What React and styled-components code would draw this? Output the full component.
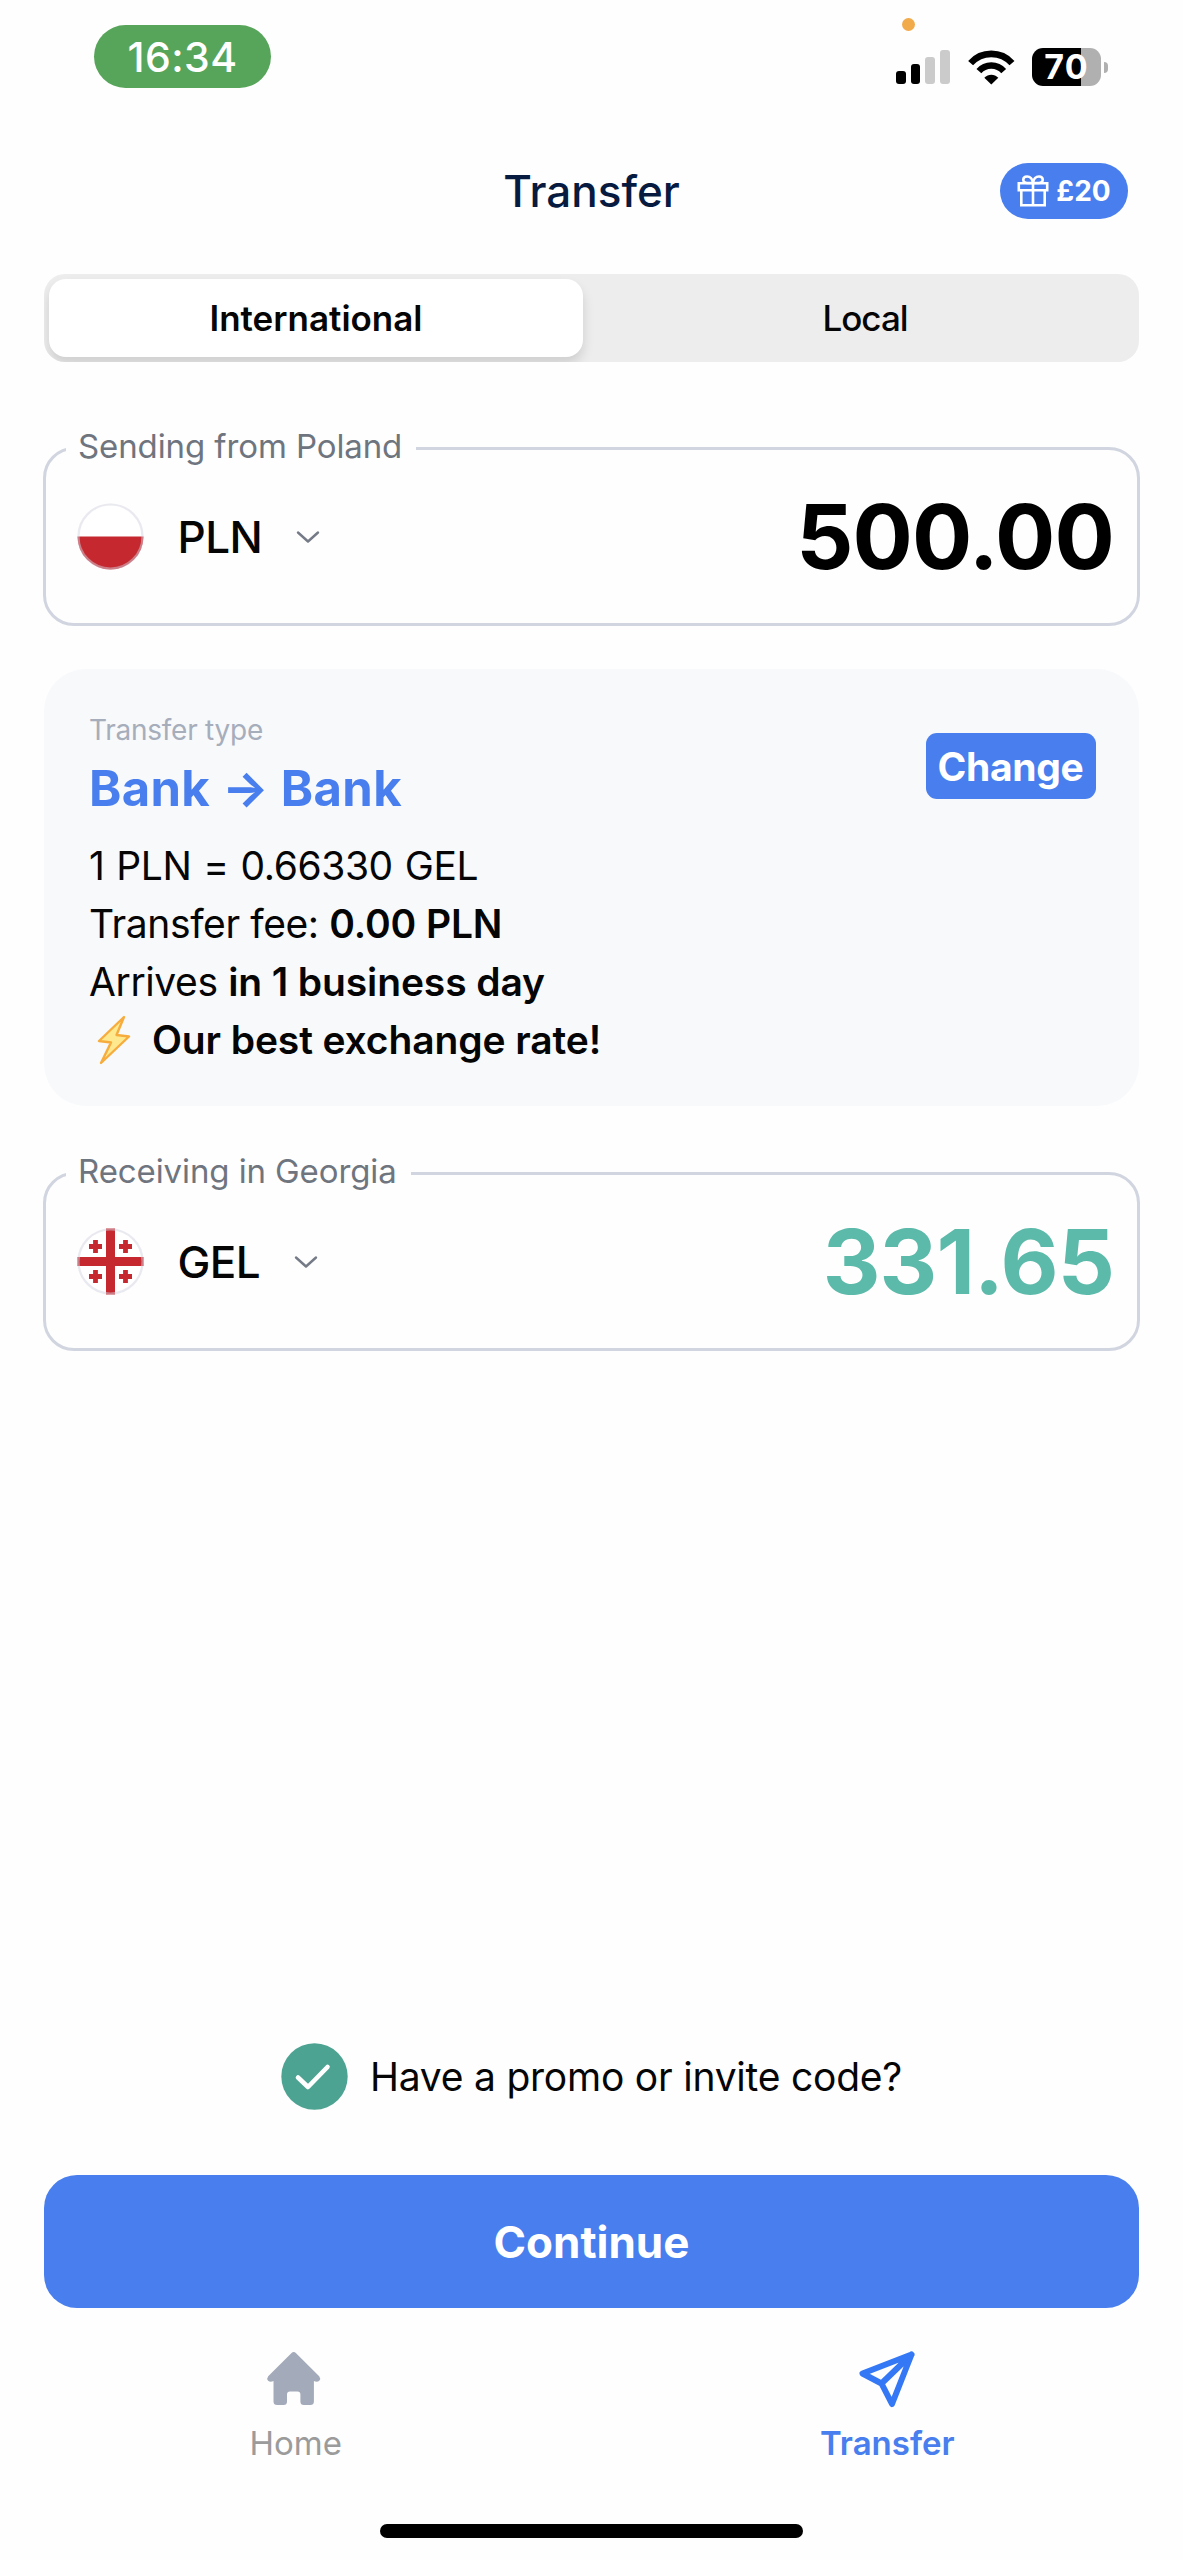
import React from "react";
import styled, { createGlobalStyle } from "styled-components";

const GlobalStyle = createGlobalStyle`
  * {
    box-sizing: border-box;
  }

  body {
    margin: 0;
    background: #fefefe;
    font-family: Inter, sans-serif;
    color: #050505;
  }

  button {
    border: none;
    padding: 0;
    font-family: inherit;
    cursor: pointer;
  }

  svg {
    display: block;
    flex-shrink: 0;
  }
`;

const Screen = styled.div`
  display: flex;
  flex-direction: column;
  width: 1183px;
  height: 2560px;
  background: #fefefe;
  white-space: nowrap;
`;

const StatusBar = styled.div`
  position: relative;
  display: flex;
  justify-content: space-between;
  align-items: flex-start;
  height: 120px;
  padding: 25px 75px 0 94px;
`;

const TimePill = styled.div`
  width: 177px;
  height: 63px;
  border-radius: 32px;
  background: #57a55a;
  color: white;
  font-size: 41px;
  font-weight: 500;
  line-height: 64px;
  text-align: center;
  letter-spacing: 0.4px;
`;

const MicDot = styled.span`
  position: absolute;
  top: 18px;
  left: 902px;
  width: 13px;
  height: 13px;
  border-radius: 50%;
  background: #f1ab4b;
`;

const StatusIcons = styled.div`
  display: flex;
  align-items: center;
  height: 38px;
  margin-top: 23px;
`;

const Signal = styled.div`
  display: flex;
  align-items: flex-end;
  gap: 5px;
  height: 34px;
  margin-right: 17px;
`;

const SignalBar = styled.span`
  width: 9.8px;
  height: ${(props) => props.$height}px;
  border-radius: 3px;
  background: ${(props) => (props.$on ? "#000" : "#cbcbcb")};
`;

const Battery = styled.div`
  width: 69px;
  height: 38px;
  margin: 0 3px 0 17px;
  border-radius: 11px;
  background: linear-gradient(to right, #000 49px, #b0b0b0 49px);
  color: white;
  font-size: 34px;
  font-weight: 700;
  line-height: 38px;
  text-align: center;
  letter-spacing: 1.2px;
`;

const BatteryNub = styled.span`
  width: 4px;
  height: 11px;
  border-radius: 0 5px 5px 0;
  background: #b0b0b0;
`;

const Header = styled.header`
  display: grid;
  grid-template-columns: 1fr auto 1fr;
  align-items: center;
  height: 142px;
  padding: 0 55px;

  h1 {
    grid-column: 2;
    margin: 0;
    font-size: 44px;
    font-weight: 500;
    line-height: 54px;
    color: #071a3f;
  }
`;

const GiftPill = styled.button`
  display: flex;
  align-items: center;
  justify-content: center;
  justify-self: end;
  gap: 7px;
  width: 128px;
  height: 56px;
  border-radius: 28px;
  background: #487eed;
  color: white;
  font-size: 28px;
  font-weight: 700;
`;

const Main = styled.main`
  display: flex;
  flex: 1;
  flex-direction: column;
  padding: 12px 43px 0;
`;

const Segmented = styled.div`
  display: grid;
  grid-template-columns: 534px 1fr;
  column-gap: 8px;
  height: 88px;
  margin: 0 1px;
  padding: 5px 0 5px 5px;
  border-radius: 21px;
  background: #ededed;
  overflow: hidden;
`;

const Segment = styled.button`
  border-radius: 17px;
  background: ${(props) => (props.$active ? "#fff" : "transparent")};
  box-shadow: ${(props) =>
    props.$active ? "0 7px 12px rgba(0, 0, 0, 0.13)" : "none"};
  color: #050505;
  font-size: 35px;
  font-weight: ${(props) => (props.$active ? 600 : 500)};
  letter-spacing: ${(props) => (props.$active ? 0 : -1)}px;
`;

const CurrencyField = styled.fieldset`
  height: 198px;
  min-width: 0;
  margin: ${(props) => props.$top}px 0 0;
  padding: 0 23px 0 20px;
  border: 3px solid #d1d5e0;
  border-radius: 31px;

  legend {
    height: 40px;
    padding: 0 14px 4px 12px;
    font-size: 33px;
    line-height: 36px;
    letter-spacing: -0.1px;
    color: #6f757f;
  }
`;

const FieldRow = styled.div`
  display: flex;
  align-items: center;
  height: 137px;
  padding-left: 11px;
`;

const Currency = styled.span`
  margin: 0 34px 0 33.5px;
  font-size: 44px;
  font-weight: 500;
  letter-spacing: -0.6px;
`;

const Amount = styled.span`
  margin-left: auto;
  font-size: 89.5px;
  font-weight: 700;
  letter-spacing: -0.9px;
  color: ${(props) => props.$color};
`;

const TypeCard = styled.section`
  display: flex;
  justify-content: space-between;
  align-items: flex-start;
  height: 437px;
  margin: 43px 1px 0;
  padding: 42px 43.5px 0 45px;
  border-radius: 42px;
  background: #f8f9fb;
`;

const TypeLabel = styled.div`
  font-size: 28px;
  line-height: 38px;
  letter-spacing: -0.25px;
  color: #a6adbb;
`;

const TypeName = styled.div`
  margin-bottom: 7px;
  font-size: 49px;
  font-weight: 700;
  line-height: 80px;
  letter-spacing: 0.3px;
  color: #487eed;
`;

const RateLine = styled.div`
  display: flex;
  align-items: center;
  height: 58px;
  font-size: 39px;
  letter-spacing: -0.4px;
  word-spacing: ${(props) => props.$wordSpacing || 0}px;
  white-space: pre;

  svg {
    margin-right: 16px;
  }

  b {
    font-weight: 600;
    letter-spacing: -0.12px;
  }
`;

const ChangeButton = styled.button`
  width: 170px;
  height: 66px;
  margin-top: 22px;
  border-radius: 11px;
  background: #487eed;
  color: white;
  font-size: 39px;
  font-weight: 700;
  letter-spacing: -0.3px;
`;

const Promo = styled.div`
  display: flex;
  align-items: center;
  justify-content: center;
  gap: 22px;
  height: 66px;
  margin-top: auto;
  font-size: 39px;
  letter-spacing: -0.23px;
`;

const ContinueButton = styled.button`
  height: 133px;
  margin: 66px 1px 0;
  border-radius: 33px;
  background: #487eed;
  color: white;
  font-size: 44px;
  font-weight: 700;
`;

const TabBar = styled.nav`
  display: grid;
  grid-template-columns: 1fr 1fr;
  height: 216px;
`;

const Tab = styled.a`
  display: flex;
  flex-direction: column;
  align-items: center;
  padding-top: 40px;
  font-size: 33px;
  font-weight: ${(props) => (props.$active ? 600 : 400)};
  color: ${(props) => (props.$active ? "#487eed" : "#9b9b9b")};

  span {
    margin-top: 13px;
    line-height: 40px;
  }
`;

const HomeIndicator = styled.div`
  width: 423px;
  height: 14px;
  margin: 0 auto 22px;
  border-radius: 7px;
  background: #000;
`;

const WifiIcon = () => (
  <svg width="48" height="36" viewBox="-0.3 0 48 36">
    <g fill="none" stroke="#000">
      <path d="M3.3 14.1A27.8 27.8 0 0 1 44.7 14.1" strokeWidth="6.6" />
      <path d="M11.6 22.1A16.4 16.4 0 0 1 36.4 22.1" strokeWidth="6.4" />
    </g>
    <path d="M17 28.7C21 24.8 27 24.8 31 28.7L24 35.5Z" />
  </svg>
);

const GiftIcon = () => (
  <svg
    width="32"
    height="32"
    viewBox="0 0 32 32"
    fill="none"
    stroke="currentColor"
    strokeWidth="2.6"
  >
    <path d="M1.8 8.3H30.2V15.3H1.8ZM4.3 15.3V30.2H27.7V15.3M16 8.3V30.2" />
    <path d="M15.5 8H10.2C4.8 8 5.2 1.5 10 1.5C13.5 1.5 15.5 4.5 16 8C16.5 4.5 18.5 1.5 22 1.5C26.8 1.5 27.2 8 21.8 8H16" />
  </svg>
);

const FlagRing = () => (
  <circle
    cx="33.5"
    cy="33.5"
    r="32"
    fill="none"
    stroke="#d3d3e2"
    strokeOpacity=".5"
    strokeWidth="2.2"
  />
);

const PolandFlag = () => (
  <svg width="67" height="67" viewBox="0 0 67 67">
    <circle cx="33.5" cy="33.5" r="33" fill="#fff" />
    <path d="M.5 33.5H66.5A33 33 0 0 1 .5 33.5Z" fill="#c5292f" />
    <FlagRing />
  </svg>
);

const GeorgiaFlag = () => (
  <svg width="67" height="67" viewBox="0 0 67 67">
    <circle cx="33.5" cy="33.5" r="33" fill="#fff" />
    <g fill="none" stroke="#c5292f">
      <path d="M33.5 .5V66.5M.5 33.5H66.5" strokeWidth="9" />
      <path
        d="M12 18.5H25M18.5 12V25M42 18.5H55M48.5 12V25M12 48.5H25M18.5 42V55M42 48.5H55M48.5 42V55"
        strokeWidth="4.8"
      />
    </g>
    <FlagRing />
  </svg>
);

const Chevron = () => (
  <svg width="24" height="14" viewBox="0 0 24 14">
    <path
      d="M2 2.5L12 11.5L22 2.5"
      fill="none"
      stroke="#747a86"
      strokeWidth="2.4"
      strokeLinecap="round"
      strokeLinejoin="round"
    />
  </svg>
);

const BoltIcon = () => (
  <svg width="47" height="52" viewBox="-7 -1 47 52">
    <path
      d="M28 3L3 27L15 28.5L5 49L33 22.5L20.5 21Z"
      fill="#fee98f"
      stroke="#f6ad3e"
      strokeWidth="2.4"
      strokeLinejoin="round"
    />
  </svg>
);

const CheckBadge = () => (
  <svg width="67" height="67" viewBox="0 0 67 67">
    <circle cx="33.5" cy="33.5" r="33.2" fill="#4da392" />
    <path
      d="M17 34.5L27 44L46.5 24"
      fill="none"
      stroke="#fff"
      strokeWidth="4.6"
      strokeLinecap="round"
      strokeLinejoin="round"
    />
  </svg>
);

const HomeIcon = () => (
  <svg width="62" height="62" viewBox="2.3 0 62 62">
    <path
      d="M28.6 5.2Q31 3 33.4 5.2L56.5 28.2Q58.3 30.5 56.6 32.7Q54.5 34.7 51.2 33V53.5Q51.2 57 47.5 57H41.2Q37.7 57 37.7 53.5V46.5Q37.7 43.5 34.7 43.5H27.3Q24.3 43.5 24.3 46.5V53.5Q24.3 57 20.8 57H14.5Q10.8 57 10.8 53.5V33Q7.5 34.7 5.4 32.7Q3.7 30.5 5.5 28.2Z"
      fill="#a3aab9"
    />
  </svg>
);

const SendIcon = () => (
  <svg width="62" height="62" viewBox="0 0 62 62">
    <path
      d="M55.5 6.5L6.5 25.5L25.5 35.5L36 56ZM55.5 6.5L25.5 35.5"
      fill="none"
      stroke="#3478f6"
      strokeWidth="6"
      strokeLinecap="round"
      strokeLinejoin="round"
    />
  </svg>
);

const signal = [
  { height: 13, on: true },
  { height: 20, on: true },
  { height: 27, on: false },
  { height: 34, on: false },
];

const App = () => {
  return (
    <Screen>
      <GlobalStyle />
      <StatusBar>
        <TimePill>16:34</TimePill>
        <MicDot />
        <StatusIcons>
          <Signal>
            {signal.map((bar) => (
              <SignalBar key={bar.height} $height={bar.height} $on={bar.on} />
            ))}
          </Signal>
          <WifiIcon />
          <Battery>70</Battery>
          <BatteryNub />
        </StatusIcons>
      </StatusBar>
      <Header>
        <h1>Transfer</h1>
        <GiftPill>
          <GiftIcon />
          £20
        </GiftPill>
      </Header>
      <Main>
        <Segmented>
          <Segment $active>International</Segment>
          <Segment>Local</Segment>
        </Segmented>
        <CurrencyField $top={66}>
          <legend>Sending from Poland</legend>
          <FieldRow>
            <PolandFlag />
            <Currency>PLN</Currency>
            <Chevron />
            <Amount $color="#000">500.00</Amount>
          </FieldRow>
        </CurrencyField>
        <TypeCard>
          <div>
            <TypeLabel>Transfer type</TypeLabel>
            <TypeName>Bank → Bank</TypeName>
            <RateLine $wordSpacing={1.3}>1 PLN = 0.66330 GEL</RateLine>
            <RateLine>
              Transfer fee: <b>0.00 PLN</b>
            </RateLine>
            <RateLine>
              Arrives <b>in 1 business day</b>
            </RateLine>
            <RateLine>
              <BoltIcon />
              <b>Our best exchange rate!</b>
            </RateLine>
          </div>
          <ChangeButton>Change</ChangeButton>
        </TypeCard>
        <CurrencyField $top={47}>
          <legend>Receiving in Georgia</legend>
          <FieldRow>
            <GeorgiaFlag />
            <Currency>GEL</Currency>
            <Chevron />
            <Amount $color="#5bbaa9">331.65</Amount>
          </FieldRow>
        </CurrencyField>
        <Promo>
          <CheckBadge />
          Have a promo or invite code?
        </Promo>
        <ContinueButton>Continue</ContinueButton>
      </Main>
      <TabBar>
        <Tab>
          <HomeIcon />
          <span>Home</span>
        </Tab>
        <Tab $active>
          <SendIcon />
          <span>Transfer</span>
        </Tab>
      </TabBar>
      <HomeIndicator />
    </Screen>
  );
};

export default App;
